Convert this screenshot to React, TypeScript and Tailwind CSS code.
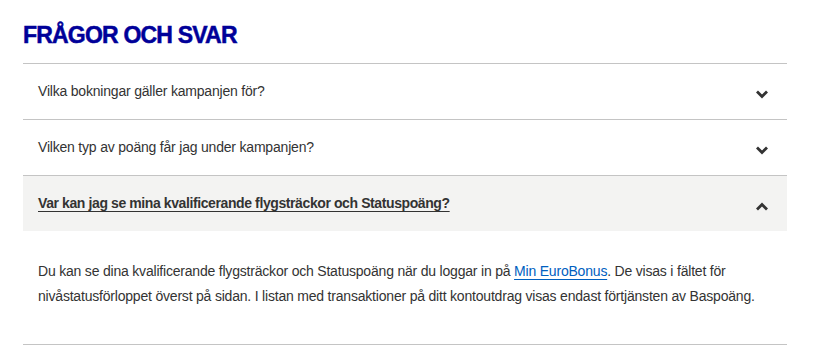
import { useState } from "react";

const faqs = [
  {
    q: "Vilka bokningar gäller kampanjen för?",
  },
  {
    q: "Vilken typ av poäng får jag under kampanjen?",
  },
  {
    q: "Var kan jag se mina kvalificerande flygsträckor och Statuspoäng?",
  },
];

function Chevron({ up }: { up?: boolean }) {
  return (
    <svg width="14" height="9" viewBox="0 0 14 9" className="shrink-0">
      <polyline
        points={up ? "2,7.5 7,2.5 12,7.5" : "2,1.5 7,6.5 12,1.5"}
        fill="none"
        stroke="#333333"
        strokeWidth="2.8"
      />
    </svg>
  );
}

export default function App() {
  const [open, setOpen] = useState(2);

  return (
    <div className="w-[830px] h-[348px] bg-white font-['Liberation_Sans',Arial,sans-serif] text-[#333]">
      <div className="ml-[23px] w-[764px] pt-[22px]">
        {/* Heading */}
        <h2 className="text-[23px] leading-[26px] font-bold tracking-[-0.8px] text-[#000099] [-webkit-text-stroke:0.5px_#000099] mb-[15px]">
          FRÅGOR OCH SVAR
        </h2>

        {/* Accordion */}
        <div className="border-b border-[#c4c4c4]">
          {faqs.map((item, i) => {
            const isOpen = open === i;
            return (
              <div key={item.q} className="border-t border-[#c4c4c4]">
                <button
                  onClick={() => setOpen(isOpen ? -1 : i)}
                  className={`w-full h-[55px] flex items-center justify-between pl-[15px] pr-[18px] text-left ${
                    isOpen ? "bg-[#f3f3f2]" : "bg-white"
                  }`}
                >
                  <span
                    className={`text-[14px] ${
                      isOpen
                        ? "font-bold underline underline-offset-[3px] tracking-[-0.4px]"
                        : "tracking-[-0.2px]"
                    }`}
                  >
                    {item.q}
                  </span>
                  <span className="pt-[6px]">
                    <Chevron up={isOpen} />
                  </span>
                </button>
                {isOpen && (
                  <div className="pl-[15px] pr-[8px] pt-[28px] pb-[35px] text-[14px] leading-[25px] tracking-[-0.2px]">
                    Du kan se dina kvalificerande flygsträckor och Statuspoäng när du loggar in på{" "}
                    <a href="#" className="text-[#0060c0] underline underline-offset-[3px]">
                      Min EuroBonus
                    </a>
                    . De visas i fältet för nivåstatusförloppet överst på sidan. I listan med transaktioner på ditt kontoutdrag visas endast förtjänsten av Baspoäng.
                  </div>
                )}
              </div>
            );
          })}
        </div>
      </div>
    </div>
  );
}
